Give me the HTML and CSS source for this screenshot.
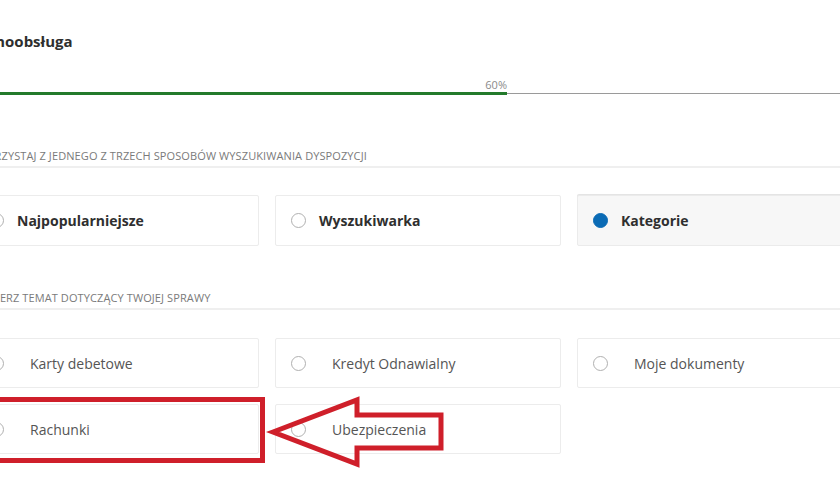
FILE: index.html
```html
<!DOCTYPE html>
<html>

<head>
    <meta charset="utf-8">
    <title>Samoobsługa</title>

    <link rel="stylesheet" href="styles.css">
</head>

<body>

    <main class="page">

        <h1 class="page-title">Samoobsługa</h1>

        <div class="progress">
            <div class="progress-fill" style="width: 60%">
                <span class="progress-value">60%</span>
            </div>
        </div>

        <section class="step">
            <h2 class="step-label">Skorzystaj z jednego z trzech sposobów wyszukiwania dyspozycji</h2>

            <div class="option-grid">
                <label class="option option-strong">
                    <span class="radio"></span>
                    <span class="option-text">Najpopularniejsze</span>
                </label>
                <label class="option option-strong">
                    <span class="radio"></span>
                    <span class="option-text">Wyszukiwarka</span>
                </label>
                <label class="option option-strong selected">
                    <span class="radio"></span>
                    <span class="option-text">Kategorie</span>
                </label>
            </div>
        </section>

        <section class="step step-topics">
            <h2 class="step-label">Wybierz temat dotyczący twojej sprawy</h2>

            <div class="option-grid">
                <label class="option option-wide">
                    <span class="radio"></span>
                    <span class="option-text">Karty debetowe</span>
                </label>
                <label class="option option-wide">
                    <span class="radio"></span>
                    <span class="option-text">Kredyt Odnawialny</span>
                </label>
                <label class="option option-wide">
                    <span class="radio"></span>
                    <span class="option-text">Moje dokumenty</span>
                </label>
                <label class="option option-wide">
                    <span class="radio"></span>
                    <span class="option-text">Rachunki</span>
                </label>
                <label class="option option-wide">
                    <span class="radio"></span>
                    <span class="option-text">Ubezpieczenia</span>
                </label>
            </div>
        </section>

    </main>

    <!-- annotation drawn over the screenshot -->
    <div class="mark-box"></div>
    <svg class="mark-arrow" width="190" height="86" viewBox="0 0 190 86">
        <polygon points="11,42 95,10 95,25 179,25 179,58 95,58 95,74"
            fill="none" stroke="#cf1f2a" stroke-width="5" stroke-linejoin="miter" />
    </svg>

</body>

</html>
```

FILE: styles.css
```css
* {
    margin: 0;
    padding: 0;
    box-sizing: border-box;
}

html,
body {
    width: 100%;
    height: 100%;
}

body {
    position: relative;
    overflow: hidden;
    background-color: #fff;
    font-family: "Open Sans", "Liberation Sans", sans-serif;
    color: #333;
}

.page {
    width: 890px;
    margin-left: -27px;
    padding-top: 31px;
}

.page-title {
    font-size: 15px;
    line-height: 20px;
    font-weight: 700;
    color: #2e2e2e;
}

.progress {
    position: relative;
    margin-top: 41px;
    height: 3px;
}

.progress::before {
    content: "";
    position: absolute;
    left: 0;
    right: 0;
    top: 1px;
    height: 1px;
    background-color: #9a9a9a;
}

.progress-fill {
    position: relative;
    height: 3px;
    background-color: #237a2b;
}

.progress-value {
    position: absolute;
    right: 0;
    bottom: 4px;
    font-size: 11px;
    line-height: 13px;
    color: #8a8a8a;
}

.step {
    margin-top: 54px;
}

.step-topics {
    margin-top: 45px;
}

.step-label {
    font-size: 11px;
    line-height: 13px;
    font-weight: 400;
    letter-spacing: 0.1px;
    text-transform: uppercase;
    color: #7a7a7a;
    padding-bottom: 4px;
    border-bottom: 2px solid #efefef;
}

.option-grid {
    display: grid;
    grid-template-columns: repeat(3, 286px);
    gap: 16px;
    margin-top: 27px;
}

.step-topics .option-grid {
    margin-top: 28px;
}

.option {
    display: flex;
    align-items: center;
    height: 51px;
    padding-left: 15px;
    border: 1px solid #ececec;
    border-radius: 2px;
    background-color: #fff;
    font-size: 14px;
}

.option-wide {
    height: 50px;
    color: #555;
}

.option-strong {
    font-weight: 700;
    color: #2f2f2f;
}

.option.selected {
    background-color: #f7f7f7;
    border-color: #ebebeb;
    box-shadow: 0 -1px 0 #e4e4e4;
}

.radio {
    width: 15px;
    height: 15px;
    border: 1px solid #b0b0b0;
    border-radius: 50%;
    background-color: #fff;
    flex-shrink: 0;
    margin-right: 13px;
}

.option-wide .radio {
    margin-right: 26px;
}

.selected .radio {
    background-color: #0b6bb5;
    border-color: #0b6bb5;
}

.mark-box {
    position: absolute;
    left: -10px;
    top: 397px;
    width: 275px;
    height: 66px;
    border: 5px solid #cf1f2a;
}

.mark-arrow {
    position: absolute;
    left: 262px;
    top: 390px;
}
```
